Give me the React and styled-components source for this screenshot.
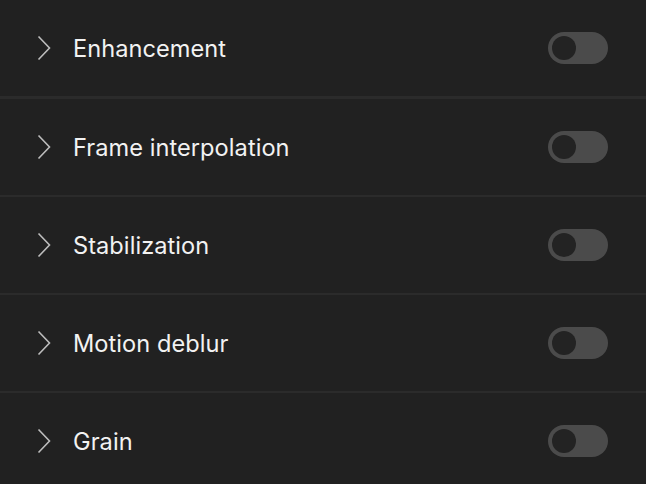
import React, { useState } from 'react'
import styled, { createGlobalStyle } from 'styled-components'

const GlobalStyle = createGlobalStyle`
  html, body {
    margin: 0;
    padding: 0;
    background: #212121;
  }
  body {
    font-family: Inter, "Noto Sans", sans-serif;
  }
`;

const List = styled.div`
  display: flex;
  flex-direction: column;
  width: 646px;
  height: 484px;
  overflow: hidden;
  background: #212121;
`;

const Row = styled.div`
  flex: 0 0 auto;
  display: flex;
  align-items: center;
  height: 96px;
  padding: 0 38px 0 37px;
  border-bottom: ${p => (p.first ? 3 : 2)}px solid #2b2b2b;
`;

const Chevron = styled.svg`
  width: 14px;
  height: 26px;
  flex: 0 0 auto;
`;

const Label = styled.span`
  flex: 1;
  margin-left: 22px;
  color: #f2f2f2;
  font-size: 23.6px;
  letter-spacing: 0.05px;
`;

const Toggle = styled.button`
  width: 60px;
  height: 32px;
  border: none;
  border-radius: 16px;
  padding: 4px;
  background: ${p => (p.on ? '#6a6a6a' : '#4b4b4b')};
  display: flex;
  justify-content: ${p => (p.on ? 'flex-end' : 'flex-start')};
  cursor: pointer;
`;

const Knob = styled.span`
  width: 24px;
  height: 24px;
  border-radius: 50%;
  background: #232323;
`;

const items = ['Enhancement', 'Frame interpolation', 'Stabilization', 'Motion deblur', 'Grain'];

export default function App() {
  const [on, setOn] = useState({});

  return (
    <List>
      <GlobalStyle />
      {items.map((name, i) => (
        <Row key={name} first={i === 0}>
          <Chevron viewBox="0 0 14 26">
            <path d="M1.5 1.5 L12.5 13 L1.5 24.5" fill="none" stroke="#bdbdbd" strokeWidth="1.6" />
          </Chevron>
          <Label>{name}</Label>
          <Toggle on={on[name]} onClick={() => setOn(s => ({ ...s, [name]: !s[name] }))}>
            <Knob />
          </Toggle>
        </Row>
      ))}
    </List>
  )
}
